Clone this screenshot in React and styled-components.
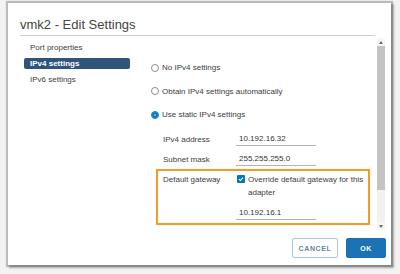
import React from "react";
import styled, { createGlobalStyle } from "styled-components";

const Global = createGlobalStyle`
  html, body { margin: 0; padding: 0; background: #f3f3f3; }
  body { font-family: "Liberation Sans", Arial, sans-serif; }
  #root { width: 400px; height: 274px; overflow: hidden; }
`;

const Dialog = styled.div`
  margin: 3px 0 0 8px;
  width: 383px;
  height: 262px;
  background: #fff;
  box-shadow: 0 0 1px 2px rgba(0,0,0,0.22), 2px 2px 2px 1px rgba(0,0,0,0.28);
  display: flex;
  flex-direction: column;
  box-sizing: border-box;
`;

const Header = styled.div`
  padding: 13.5px 16px 0 12px;
`;

const Title = styled.div`
  font-size: 13px;
  line-height: 16px;
  color: #454545;
  padding-bottom: 2.5px;
  border-bottom: 1px solid #cfcfcf;
`;

const Body = styled.div`
  margin-top: 2px;
  height: 192px;
  display: flex;
  padding-right: 6px;
`;

const Nav = styled.div`
  margin-left: 16px;
  width: 106px;
  padding-top: 3.5px;
  display: flex;
  flex-direction: column;
  gap: 5px;
`;

const NavItem = styled.div`
  height: 11px;
  line-height: 11px;
  padding-left: 6px;
  font-size: 8px;
  border-radius: 2px;
  color: ${p => (p.$active ? "#fff" : "#3d3d3d")};
  background: ${p => (p.$active ? "#30557a" : "transparent")};
  font-weight: ${p => (p.$active ? 700 : 400)};
`;

const Content = styled.div`
  flex: 1;
  padding: 23.5px 0 0 21px;
  overflow: hidden;
`;

const RadioRow = styled.div`
  display: flex;
  align-items: center;
  gap: 3px;
  height: 12px;
  margin-bottom: 11.5px;
  font-size: 8px;
  color: #3d3d3d;
`;

const Radio = styled.span`
  width: 8px;
  height: 8px;
  border-radius: 50%;
  box-sizing: border-box;
  border: 1px solid ${p => (p.$checked ? "#0079b8" : "#8d8d8d")};
  background: #fff;
  box-shadow: ${p => (p.$checked ? "inset 0 0 0 2.2px #0079b8" : "none")};
  flex: none;
`;

const FieldRow = styled.div`
  display: grid;
  grid-template-columns: 73px 80px;
  align-items: center;
  margin-left: ${p => p.$indent}px;
  margin-top: ${p => p.$top}px;
  font-size: 8px;
  color: #3d3d3d;
`;

const Label = styled.span`
  line-height: 13px;
  align-self: ${p => (p.$top ? "start" : "center")};
`;

const Input = styled.div`
  height: 14px;
  line-height: 13px;
  box-sizing: border-box;
  padding-left: 3px;
  border-bottom: 1px solid #b4b4b4;
  color: #333;
`;

const GatewayBox = styled.div`
  margin: 3px 0 0 5px;
  width: 214px;
  box-sizing: border-box;
  border: 2px solid #f39b25;
  padding: 2px 0 3px 5px;
  display: grid;
  grid-template-columns: 73px 1fr;
  font-size: 8px;
  color: #3d3d3d;
`;

const GatewayValue = styled.div`
  display: flex;
  flex-direction: column;
`;

const CheckRow = styled.div`
  display: flex;
  align-items: flex-start;
  gap: 3px;
  margin-left: 1px;
`;

const Checkbox = styled.span`
  width: 8px;
  height: 8px;
  margin-top: 2px;
  border-radius: 1px;
  background: #0079b8;
  display: flex;
  align-items: center;
  justify-content: center;
  flex: none;
`;

const CheckText = styled.span`
  width: 120px;
  line-height: 13px;
`;

const GatewayInput = styled(Input)`
  width: 80px;
  margin-top: 7px;
`;

const Scrollbar = styled.div`
  width: 8px;
  display: flex;
  flex-direction: column;
  background: #f1f1f1;
`;

const Arrow = styled.div`
  height: 8px;
  display: flex;
  align-items: center;
  justify-content: center;
  background: #f6f6f6;
`;

const Thumb = styled.div`
  height: 144px;
  background: #c3c3c3;
`;

const Track = styled.div`
  flex: 1;
`;

const Footer = styled.div`
  display: flex;
  justify-content: flex-end;
  gap: 8px;
  padding: 8px 5px 7px 0;
`;

const Button = styled.button`
  height: 20px;
  width: ${p => p.$w}px;
  padding: 0;
  box-sizing: border-box;
  border-radius: 2px;
  font-family: "Liberation Sans", Arial, sans-serif;
  font-size: 7px;
  font-weight: 700;
  letter-spacing: 0.6px;
  border: 1px solid ${p => (p.$primary ? "#1c73b4" : "#a9c6dc")};
  background: ${p => (p.$primary ? "#1c73b4" : "#fff")};
  color: ${p => (p.$primary ? "#fff" : "#5f86a6")};
`;

export default function App() {
  return (
    <>
      <Global />
      <Dialog>
        <Header>
          <Title>vmk2 - Edit Settings</Title>
        </Header>
        <Body>
          <Nav>
            <NavItem>Port properties</NavItem>
            <NavItem $active>IPv4 settings</NavItem>
            <NavItem>IPv6 settings</NavItem>
          </Nav>
          <Content>
            <RadioRow><Radio />No IPv4 settings</RadioRow>
            <RadioRow><Radio />Obtain IPv4 settings automatically</RadioRow>
            <RadioRow><Radio $checked />Use static IPv4 settings</RadioRow>
            <FieldRow $indent={12} $top={1.5}>
              <Label>IPv4 address</Label>
              <Input>10.192.16.32</Input>
            </FieldRow>
            <FieldRow $indent={12} $top={6}>
              <Label>Subnet mask</Label>
              <Input>255.255.255.0</Input>
            </FieldRow>
            <GatewayBox>
              <Label $top>Default gateway</Label>
              <GatewayValue>
                <CheckRow>
                  <Checkbox>
                    <svg width="6" height="6" viewBox="0 0 6 6">
                      <path d="M1 3.1 L2.4 4.5 L5 1.6" fill="none" stroke="#fff" strokeWidth="1.1" />
                    </svg>
                  </Checkbox>
                  <CheckText>Override default gateway for this adapter</CheckText>
                </CheckRow>
                <GatewayInput>10.192.16.1</GatewayInput>
              </GatewayValue>
            </GatewayBox>
          </Content>
          <Scrollbar>
            <Arrow>
              <svg width="4" height="3" viewBox="0 0 4 3"><path d="M0 3 L2 0 L4 3 Z" fill="#6a6a6a" /></svg>
            </Arrow>
            <Thumb />
            <Track />
            <Arrow>
              <svg width="4" height="3" viewBox="0 0 4 3"><path d="M0 0 L4 0 L2 3 Z" fill="#6a6a6a" /></svg>
            </Arrow>
          </Scrollbar>
        </Body>
        <Footer>
          <Button $w={46}>CANCEL</Button>
          <Button $w={40} $primary>OK</Button>
        </Footer>
      </Dialog>
    </>
  );
}
